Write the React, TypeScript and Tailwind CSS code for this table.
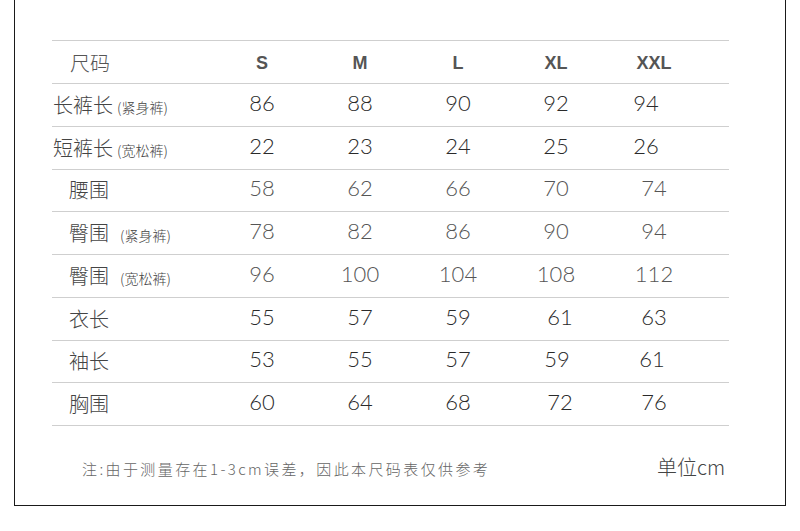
import React from 'react';

// ---------------------------------------------------------------------------
// Size chart data
// ---------------------------------------------------------------------------

interface Row {
  label: string;
  note?: string;
  indent: 'wide' | 'narrow';
  noteGap?: string;
  values: string[];
  shifts: string[];
  tone: 'dark' | 'mid';
}

const SIZES = ['S', 'M', 'L', 'XL', 'XXL'];

const ROWS: Row[] = [
  {
    label: '长裤长',
    note: '(紧身裤)',
    indent: 'narrow',
    values: ['86', '88', '90', '92', '94'],
    shifts: ['', '', '', '', 'mr-[16px]'],
    tone: 'dark',
  },
  {
    label: '短裤长',
    note: '(宽松裤)',
    indent: 'narrow',
    values: ['22', '23', '24', '25', '26'],
    shifts: ['', '', '', '', 'mr-[16px]'],
    tone: 'dark',
  },
  {
    label: '腰围',
    indent: 'wide',
    values: ['58', '62', '66', '70', '74'],
    shifts: ['', '', '', '', ''],
    tone: 'mid',
  },
  {
    label: '臀围',
    note: '(紧身裤)',
    indent: 'wide',
    noteGap: 'ml-[11px]',
    values: ['78', '82', '86', '90', '94'],
    shifts: ['', '', '', '', ''],
    tone: 'mid',
  },
  {
    label: '臀围',
    note: '(宽松裤)',
    indent: 'wide',
    noteGap: 'ml-[11px]',
    values: ['96', '100', '104', '108', '112'],
    shifts: ['', '', '', '', ''],
    tone: 'mid',
  },
  {
    label: '衣长',
    indent: 'wide',
    values: ['55', '57', '59', '61', '63'],
    shifts: ['', '', '', 'ml-[8px]', ''],
    tone: 'dark',
  },
  {
    label: '袖长',
    indent: 'wide',
    values: ['53', '55', '57', '59', '61'],
    shifts: ['', '', '', 'ml-[2px]', 'mr-[4px]'],
    tone: 'dark',
  },
  {
    label: '胸围',
    indent: 'wide',
    values: ['60', '64', '68', '72', '76'],
    shifts: ['', '', '', 'ml-[8px]', ''],
    tone: 'dark',
  },
];

const FONT = "font-['Noto_Sans_CJK_SC_Light','Noto_Sans_CJK_SC_DemiLight','Noto_Sans_CJK_SC',sans-serif]";
const NUM_FONT = "font-['Lato','Noto_Sans_CJK_SC',sans-serif]";

export default function App() {
  return (
    <div className="w-[800px] h-[531px] bg-white">
      <div className="ml-[14px] w-[772px] h-[506px] border-x border-b border-[#1a1a1a] pl-[37px] pt-[40px]">
        {/* Table */}
        <div className="w-[677px] border-t border-[#cfcfcf]">
          {/* Header */}
          <div className="grid grid-cols-[161px_98px_98px_98px_98px_98px_1fr] h-[43px] items-center border-b border-[#cfcfcf]">
            <span className={`pl-[18px] pt-[1px] text-[20px] text-[#555] font-light ${FONT}`}>尺码</span>
            {SIZES.map((s) => (
              <span
                key={s}
                className="text-center pt-[2px] text-[18px] font-bold text-[#555] font-['Liberation_Sans',sans-serif]"
              >
                {s}
              </span>
            ))}
            <span />
          </div>

          {/* Body rows */}
          {ROWS.map((row, i) => (
            <div
              key={i}
              className="grid grid-cols-[161px_98px_98px_98px_98px_98px_1fr] h-[42.75px] items-center border-b border-[#cfcfcf]"
            >
              <span
                className={`flex items-baseline whitespace-nowrap text-[20px] text-[#444] font-light ${FONT} ${
                  row.indent === 'wide' ? 'pl-[17px]' : 'pl-[1px]'
                }`}
              >
                {row.label}
                {row.note && (
                  <span className={`text-[14px] text-[#444] ${row.noteGap ?? 'ml-[4px]'}`}>{row.note}</span>
                )}
              </span>
              {row.values.map((v, j) => (
                <span
                  key={j}
                  className={`text-center pb-[5px] text-[22px] font-light ${NUM_FONT} ${
                    row.tone === 'dark' ? 'text-[#2a2a2a]' : 'text-[#555]'
                  } ${row.shifts[j]}`}
                >
                  {v}
                </span>
              ))}
              <span />
            </div>
          ))}
        </div>

        {/* Footer */}
        <div className="flex items-end justify-between w-[673px] mt-[26px]">
          <span className={`pl-[30px] mb-[2px] text-[15px] tracking-[2.4px] text-[#666] ${FONT}`}>
            注:由于测量存在1-3cm误差，因此本尺码表仅供参考
          </span>
          <span className={`text-[20px] text-[#444] ${FONT}`}>单位cm</span>
        </div>
      </div>
    </div>
  );
}
